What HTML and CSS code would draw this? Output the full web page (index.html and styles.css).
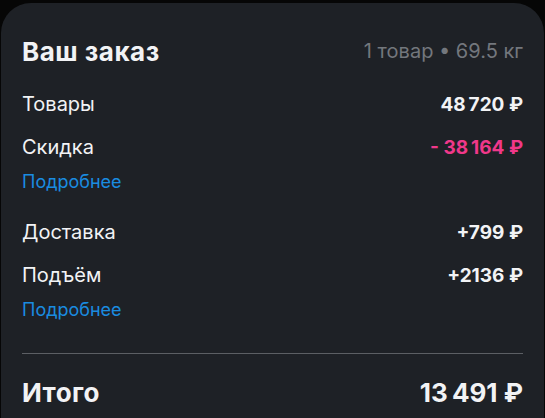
FILE: index.html
```html
<!DOCTYPE html>
<html lang="ru">
<head>
    <meta charset="UTF-8">
    <meta name="viewport" content="width=device-width, initial-scale=1.0">
    <title>Ваш заказ</title>
    <link rel="stylesheet" href="styles.css">
</head>
<body>
    <div class="card">
        <div class="header">
            <h2>Ваш заказ</h2>
            <span class="meta">1 товар • 69.5 кг</span>
        </div>

        <div class="row first">
            <span>Товары</span>
            <span class="sum">48&#8239;720&nbsp;₽</span>
        </div>
        <div class="row">
            <span>Скидка</span>
            <span class="sum discount">-&nbsp;38&#8239;164&nbsp;₽</span>
        </div>
        <a class="more" href="#">Подробнее</a>

        <div class="row group">
            <span>Доставка</span>
            <span class="sum">+799&nbsp;₽</span>
        </div>
        <div class="row">
            <span>Подъём</span>
            <span class="sum">+2136&nbsp;₽</span>
        </div>
        <a class="more" href="#">Подробнее</a>

        <div class="divider"></div>

        <div class="total">
            <span>Итого</span>
            <span>13&#8239;491&nbsp;₽</span>
        </div>
    </div>
</body>
</html>
```

FILE: styles.css
```css
body {
    margin: 0;
    background-color: #060606;
    font-family: Inter, "Noto Sans", sans-serif;
    color: #f2f3f5;
    overflow: hidden;
}

.card {
    margin: 3px 1px 0;
    padding: 32px 21px 40px;
    background-color: #1e2126;
    border-radius: 30px 30px 0 0;
    min-height: 420px;
}

.header {
    display: flex;
    justify-content: space-between;
    align-items: center;
    height: 32px;
}

.header h2 {
    margin: 0;
    font-size: 26px;
    font-weight: 700;
    letter-spacing: 0.5px;
}

.meta {
    font-size: 20px;
    color: #73777d;
}

.row {
    display: flex;
    justify-content: space-between;
    align-items: center;
    height: 26px;
    margin-top: 17px;
    font-size: 20px;
}

.row.first {
    margin-top: 24px;
}

.row.group {
    margin-top: 26px;
}

.sum {
    font-size: 19px;
    font-weight: 700;
}

.discount {
    color: #f0388a;
}

.more {
    display: block;
    margin-top: 11px;
    line-height: 22px;
    font-size: 18px;
    color: #1a8ce0;
    text-decoration: none;
}

.divider {
    height: 1px;
    margin-top: 32px;
    background-color: #5c5f64;
}

.total {
    display: flex;
    justify-content: space-between;
    align-items: center;
    height: 32px;
    margin-top: 22px;
    font-size: 26px;
    font-weight: 700;
    letter-spacing: 0.4px;
}
```
